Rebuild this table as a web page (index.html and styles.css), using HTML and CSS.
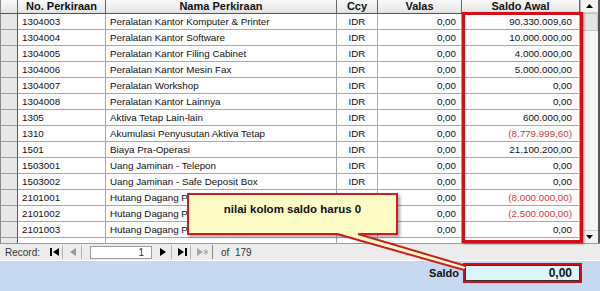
FILE: index.html
```html
<!DOCTYPE html>
<html>
<head>
<meta charset="utf-8">
<link rel="stylesheet" href="styles.css">
</head>
<body>
<div class="sheet">
  <div class="grid">
    <div class="row head">
      <div class="cell sel"></div>
      <div class="cell">No. Perkiraan</div>
      <div class="cell">Nama Perkiraan</div>
      <div class="cell">Ccy</div>
      <div class="cell">Valas</div>
      <div class="cell">Saldo Awal</div>
    </div>
    <div class="row"><div class="cell sel"></div><div class="cell">1304003</div><div class="cell">Peralatan Kantor Komputer &amp; Printer</div><div class="cell ctr">IDR</div><div class="cell num">0,00</div><div class="cell num sal">90.330.009,60</div></div>
    <div class="row"><div class="cell sel"></div><div class="cell">1304004</div><div class="cell">Peralatan Kantor Software</div><div class="cell ctr">IDR</div><div class="cell num">0,00</div><div class="cell num sal">10.000.000,00</div></div>
    <div class="row"><div class="cell sel"></div><div class="cell">1304005</div><div class="cell">Peralatan Kantor Filing Cabinet</div><div class="cell ctr">IDR</div><div class="cell num">0,00</div><div class="cell num sal">4.000.000,00</div></div>
    <div class="row"><div class="cell sel"></div><div class="cell">1304006</div><div class="cell">Peralatan Kantor Mesin Fax</div><div class="cell ctr">IDR</div><div class="cell num">0,00</div><div class="cell num sal">5.000.000,00</div></div>
    <div class="row"><div class="cell sel"></div><div class="cell">1304007</div><div class="cell">Peralatan Workshop</div><div class="cell ctr">IDR</div><div class="cell num">0,00</div><div class="cell num sal">0,00</div></div>
    <div class="row"><div class="cell sel"></div><div class="cell">1304008</div><div class="cell">Peralatan Kantor Lainnya</div><div class="cell ctr">IDR</div><div class="cell num">0,00</div><div class="cell num sal">0,00</div></div>
    <div class="row"><div class="cell sel"></div><div class="cell">1305</div><div class="cell">Aktiva Tetap Lain-lain</div><div class="cell ctr">IDR</div><div class="cell num">0,00</div><div class="cell num sal">600.000,00</div></div>
    <div class="row"><div class="cell sel"></div><div class="cell">1310</div><div class="cell">Akumulasi Penyusutan Aktiva Tetap</div><div class="cell ctr">IDR</div><div class="cell num">0,00</div><div class="cell num sal neg">(8.779.999,60)</div></div>
    <div class="row"><div class="cell sel"></div><div class="cell">1501</div><div class="cell">Biaya Pra-Operasi</div><div class="cell ctr">IDR</div><div class="cell num">0,00</div><div class="cell num sal">21.100.200,00</div></div>
    <div class="row"><div class="cell sel"></div><div class="cell">1503001</div><div class="cell">Uang Jaminan - Telepon</div><div class="cell ctr">IDR</div><div class="cell num">0,00</div><div class="cell num sal">0,00</div></div>
    <div class="row"><div class="cell sel"></div><div class="cell">1503002</div><div class="cell">Uang Jaminan - Safe Deposit Box</div><div class="cell ctr">IDR</div><div class="cell num">0,00</div><div class="cell num sal">0,00</div></div>
    <div class="row"><div class="cell sel"></div><div class="cell">2101001</div><div class="cell">Hutang Dagang Pihak Ketiga</div><div class="cell ctr">IDR</div><div class="cell num">0,00</div><div class="cell num sal neg">(8.000.000,00)</div></div>
    <div class="row"><div class="cell sel"></div><div class="cell">2101002</div><div class="cell">Hutang Dagang Pihak Ketiga</div><div class="cell ctr">IDR</div><div class="cell num">0,00</div><div class="cell num sal neg">(2.500.000,00)</div></div>
    <div class="row"><div class="cell sel"></div><div class="cell">2101003</div><div class="cell">Hutang Dagang Pihak Ketiga</div><div class="cell ctr">IDR</div><div class="cell num">0,00</div><div class="cell num sal">0,00</div></div>
    <div class="row"><div class="cell sel"></div><div class="cell">2101004</div><div class="cell">HUTANG TEH</div><div class="cell ctr">IDR</div><div class="cell num">0,00</div><div class="cell num sal">0,00</div></div>
  </div>
  <div class="vscroll">
    <div class="vbtn"><svg width="7" height="4" viewBox="0 0 7 4"><polygon points="0,4 7,4 3.5,0" fill="#000"/></svg></div>
    <div class="thumb"></div>
    <div class="track"></div>
    <div class="vbtn"><svg width="7" height="4" viewBox="0 0 7 4"><polygon points="0,0 7,0 3.5,4" fill="#000"/></svg></div>
  </div>
</div>
<div class="nav">
  <span class="nav-label">Record:</span>
  <span class="nbtn first"><svg width="9" height="8" viewBox="0 0 9 8"><rect x="0" y="0" width="2" height="8" fill="#000"/><polygon points="9,0 9,8 3,4" fill="#000"/></svg></span>
  <span class="nbtn"><svg width="6" height="8" viewBox="0 0 6 8"><polygon points="6,0 6,8 0,4" fill="#9a9a9a"/></svg></span>
  <span class="nbox">1</span>
  <span class="nbtn"><svg width="6" height="8" viewBox="0 0 6 8"><polygon points="0,0 0,8 6,4" fill="#000"/></svg></span>
  <span class="nbtn"><svg width="9" height="8" viewBox="0 0 9 8"><polygon points="0,0 0,8 6,4" fill="#000"/><rect x="7" y="0" width="2" height="8" fill="#000"/></svg></span>
  <span class="nbtn wide"><svg width="11" height="8" viewBox="0 0 11 8"><polygon points="0,0 0,8 6,4" fill="#a8a8a8"/><path d="M9 1v6M6.5 2.5l5 3M6.5 5.5l5-3" stroke="#a8a8a8" stroke-width="1"/></svg></span>
  <span class="nav-of">of &nbsp;179</span>
</div>
<div class="footer">
  <span class="saldo-label">Saldo</span>
  <span class="saldo-box">0,00</span>
</div>

<div class="redbox"></div>
<div class="callout">nilai kolom saldo harus 0</div>
<svg class="tail" width="150" height="45" viewBox="0 0 150 45">
  <polygon points="7,0 28,0 136,34 133,37" fill="#fefcc6"/>
  <polyline points="7,1 134,37" fill="none" stroke="#c81e24" stroke-width="2"/>
  <polyline points="28,1 136,33" fill="none" stroke="#c81e24" stroke-width="2"/>
</svg>
</body>
</html>
```
FILE: styles.css
```css
* { box-sizing: border-box; }
body {
  margin: 0;
  width: 600px;
  height: 291px;
  overflow: hidden;
  position: relative;
  background: #c6d9f0;
  font-family: "Liberation Sans", Arial, sans-serif;
  color: #111;
}
.sheet {
  display: flex;
  height: 243px;
  background: #fff;
}
.grid {
  width: 580px;
  height: 243px;
  overflow: hidden;
}
.row {
  display: grid;
  grid-template-columns: 18px 88px 231px 41px 84px 118px;
  height: 16px;
}
.cell {
  border-right: 1px solid #a8a8a8;
  border-bottom: 1px solid #a8a8a8;
  font-size: 9.8px;
  line-height: 15px;
  padding: 0 4px;
  white-space: nowrap;
  overflow: hidden;
}
.sel {
  background: #e8e8e8;
  border-left: 1px solid #8a8a8a;
  border-right: 1px solid #555;
  border-bottom: 1px solid #9a9a9a;
}
.num { text-align: right; padding-right: 5px; }
.sal { padding-right: 7px; }
.ctr { text-align: center; }
.neg { color: #d23a46; }
.head { height: 14px; }
.head .cell {
  font-weight: bold;
  text-align: center;
  line-height: 13px;
  font-size: 11px;
  background: linear-gradient(#fafafa, #e2e2e2);
  border-right: 1px solid #666;
  border-bottom: 1px solid #555;
}
.vscroll {
  width: 20px;
  height: 243px;
  display: flex;
  flex-direction: column;
  background: #f0f0f0;
  border-left: 1px solid #b8b8b8;
  border-right: 2px solid #555;
}
.vbtn {
  height: 13px;
  display: flex;
  align-items: center;
  justify-content: center;
  background: #f2f2f2;
  border-bottom: 1px solid #cfcfcf;
}
.vbtn:last-child { border-top: 1px solid #cfcfcf; border-bottom: none; }
.thumb {
  height: 18px;
  background: #e4e4e4;
  border: 1px solid #c4c4c4;
}
.track { flex: 1; background: #f4f4f4; }
.nav {
  height: 18px;
  background: #ececec;
  border-top: 1px solid #9a9a9a;
  border-bottom: 1px solid #fff;
  display: flex;
  align-items: center;
  font-size: 10px;
  color: #333;
  padding-left: 5px;
}
.nav-label { width: 41px; }
.nbtn {
  height: 14px;
  width: 17px;
  display: flex;
  align-items: center;
  justify-content: center;
  border-right: 1px solid #b4b4b4;
  margin-right: 2px;
}
.nbtn.wide { width: 20px; border-right: 1px solid #888; }
.nbox {
  width: 62px;
  height: 13px;
  margin: 0 3px 0 6px;
  background: #fff;
  border: 1px solid #9c9c9c;
  text-align: right;
  padding-right: 7px;
  line-height: 12px;
}
.nav-of { margin-left: 6px; }
.footer {
  height: 31px;
  display: flex;
  justify-content: flex-end;
  align-items: flex-start;
  padding: 4px 20px 0 0;
  gap: 6px;
}
.saldo-label {
  font-weight: bold;
  font-size: 11px;
  line-height: 16px;
}
.saldo-box {
  width: 115px;
  height: 16px;
  background: #dcf5fa;
  border: 1px solid #333;
  outline: 2px solid #d01018;
  outline-offset: 0;
  text-align: right;
  font-weight: bold;
  font-size: 12px;
  line-height: 14px;
  padding-right: 7px;
}
.redbox {
  position: absolute;
  left: 462px;
  top: 12px;
  width: 121px;
  height: 231px;
  border: 3px solid #d01018;
  box-shadow: 1px 1px 2px rgba(0,0,0,0.45);
}
.callout {
  position: absolute;
  left: 187px;
  top: 193px;
  width: 211px;
  height: 42px;
  background: #fefcc6;
  border: 2px solid #c81e24;
  box-shadow: 2px 2px 3px rgba(0,0,0,0.35);
  font-weight: bold;
  font-size: 11.5px;
  text-align: center;
  padding-top: 8px;
  color: #111;
}
.tail {
  position: absolute;
  left: 330px;
  top: 233px;
}
```
